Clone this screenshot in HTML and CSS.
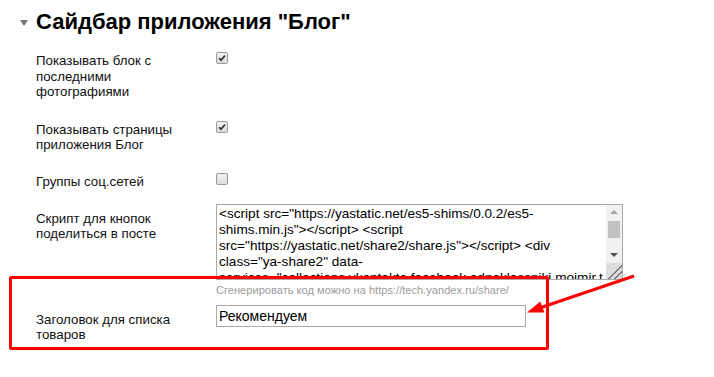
FILE: index.html
```html
<!DOCTYPE html>
<html lang="ru">
<head>
<meta charset="utf-8">
<title>Сайдбар приложения "Блог"</title>
<link rel="stylesheet" href="styles.css">
</head>
<body>
<div class="page">
  <h2 class="section-title"><span class="caret"></span>Сайдбар приложения "Блог"</h2>
  <div class="form">
    <div class="row row-1">
      <div class="label">Показывать блок с последними фотографиями</div>
      <div class="field"><span class="checkbox"><svg viewBox="0 0 12 12" width="12" height="12"><path d="M2.5 6.2 L4.8 8.6 L9.6 3.2" fill="none" stroke="#3a3a3a" stroke-width="2"/></svg></span></div>
    </div>
    <div class="row row-2">
      <div class="label">Показывать страницы приложения Блог</div>
      <div class="field"><span class="checkbox"><svg viewBox="0 0 12 12" width="12" height="12"><path d="M2.5 6.2 L4.8 8.6 L9.6 3.2" fill="none" stroke="#3a3a3a" stroke-width="2"/></svg></span></div>
    </div>
    <div class="row row-3">
      <div class="label">Группы соц.сетей</div>
      <div class="field"><span class="checkbox"></span></div>
    </div>
    <div class="row row-4">
      <div class="label label-pad">Скрипт для кнопок поделиться в посте</div>
      <div class="field">
        <div class="code-box">
          <textarea class="code">&lt;script src="https://yastatic.net/es5-shims/0.0.2/es5-shims.min.js"&gt;&lt;/script&gt; &lt;script src="https://yastatic.net/share2/share.js"&gt;&lt;/script&gt; &lt;div class="ya-share2" data-services="collections,vkontakte,facebook,odnoklassniki,moimir,twitter" data-counter=""&gt;&lt;/div&gt;</textarea>
          <div class="scrollbar">
            <div class="sb-btn"><span class="tri-up"></span></div>
            <div class="sb-track"><div class="sb-thumb"></div></div>
            <div class="sb-btn"><span class="tri-down"></span></div>
            <div class="sb-corner"></div>
          </div>
        </div>
        <div class="hint">Сгенерировать код можно на https://tech.yandex.ru/share/</div>
      </div>
    </div>
    <div class="row row-5">
      <div class="label label-pad2">Заголовок для списка товаров</div>
      <div class="field"><input class="text-input" type="text" value="Рекомендуем"></div>
    </div>
  </div>
  <div class="highlight"></div>
  <svg class="arrow" width="714" height="377" viewBox="0 0 714 377">
    <line x1="634" y1="276" x2="541" y2="307.5" stroke="#ff0000" stroke-width="3"/>
    <polygon points="527,312.5 544.5,312.5 540.2,301.5" fill="#ff0000"/>
  </svg>
</div>
</body>
</html>
```

FILE: styles.css
```css
html, body {
  margin: 0;
  padding: 0;
  background: #fff;
}
.page {
  position: relative;
  width: 714px;
  height: 377px;
  overflow: hidden;
  font-family: "Liberation Sans", Arial, sans-serif;
  color: #111;
}
.section-title {
  display: flex;
  align-items: center;
  margin: 0;
  padding: 9px 0 0 20px;
  font-size: 22px;
  line-height: 26px;
  font-weight: bold;
  color: #000;
}
.caret {
  width: 0;
  height: 0;
  border-left: 4.5px solid transparent;
  border-right: 4.5px solid transparent;
  border-top: 6px solid #777;
  margin-right: 8px;
  margin-top: 2px;
}
.form {
  display: flex;
  flex-direction: column;
  padding-left: 36px;
  margin-top: 17px;
}
.row {
  display: grid;
  grid-template-columns: 180px 410px;
}
.row-2 { margin-top: 21px; }
.row-3 { margin-top: 20px; }
.row-4 { margin-top: 14px; }
.row-5 { margin-top: 8px; }
.label {
  font-size: 13.3px;
  line-height: 15.6px;
  padding-top: 1px;
  padding-right: 20px;
}
.label-pad { padding-top: 7px; }
.label-pad2 { padding-top: 7px; }
.field {
  display: flex;
  flex-direction: column;
  align-items: flex-start;
}
.checkbox {
  box-sizing: border-box;
  width: 12px;
  height: 12px;
  border: 1px solid #9a9a9a;
  border-radius: 2px;
  background: linear-gradient(#f2f2f2, #dcdcdc);
  display: flex;
  align-items: center;
  justify-content: center;
}
.checkbox svg {
  display: block;
  width: 10px;
  height: 10px;
}
.code-box {
  box-sizing: border-box;
  display: flex;
  width: 407px;
  height: 76px;
  border: 1px solid #a9a9a9;
  background: #fff;
}
.code {
  flex: 1;
  min-width: 0;
  margin: 0;
  padding: 1px 2px;
  border: 0;
  outline: none;
  font-family: "Liberation Sans", Arial, sans-serif;
  font-size: 13.6px;
  line-height: 16px;
  color: #000;
  overflow: hidden;
  resize: none;
}
.scrollbar {
  width: 16px;
  display: flex;
  flex-direction: column;
  background: #f1f1f1;
}
.sb-btn {
  height: 15px;
  display: flex;
  align-items: center;
  justify-content: center;
}
.tri-up {
  width: 0;
  height: 0;
  border-left: 4px solid transparent;
  border-right: 4px solid transparent;
  border-bottom: 4px solid #a3a3a3;
}
.tri-down {
  width: 0;
  height: 0;
  border-left: 4px solid transparent;
  border-right: 4px solid transparent;
  border-top: 4px solid #505050;
}
.sb-track {
  flex: 1;
  padding: 1px 2px 0;
}
.sb-thumb {
  height: 17px;
  background: #c1c1c1;
}
.sb-corner {
  height: 16px;
  background-color: #dcdcdc;
  background-image: linear-gradient(135deg,
    transparent 0 56%, #7a7a7a 56% 61%, transparent 61% 74%, #7a7a7a 74% 79%, transparent 79%);
}
.hint {
  margin-top: 4px;
  font-size: 11.1px;
  line-height: 13px;
  color: #9c9c9c;
}
.text-input {
  box-sizing: border-box;
  width: 310px;
  height: 22px;
  margin: 0;
  padding: 0 2px;
  border: 1px solid #a9a9a9;
  font-family: "Liberation Sans", Arial, sans-serif;
  font-size: 14px;
  color: #000;
}
.highlight {
  position: absolute;
  left: 9px;
  top: 276px;
  width: 540px;
  height: 74px;
  box-sizing: border-box;
  border: 3.5px solid #ff0000;
  border-radius: 2px;
  pointer-events: none;
}
.arrow {
  position: absolute;
  left: 0;
  top: 0;
  pointer-events: none;
}
```
